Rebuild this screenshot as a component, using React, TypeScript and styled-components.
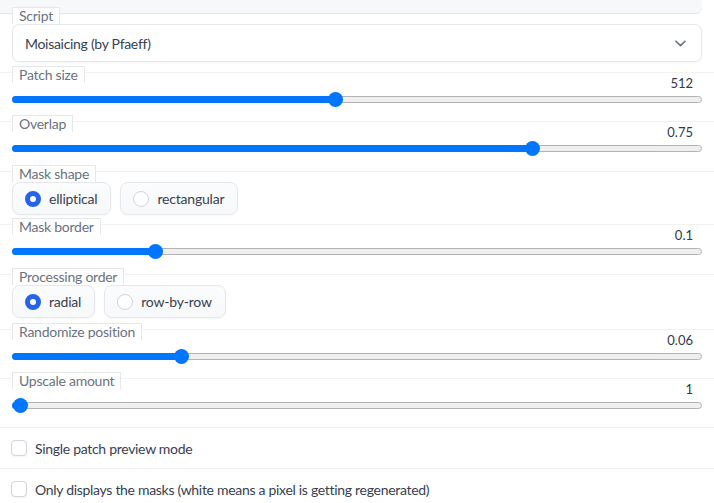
import React from "react";
import styled, { createGlobalStyle } from "styled-components";

const Global = createGlobalStyle`
  html, body { margin: 0; padding: 0; background: #ffffff; }
  body { font-family: Lato, "Open Sans", sans-serif; -webkit-font-smoothing: antialiased; }
  * { box-sizing: border-box; }
`;

const Page = styled.div`
  width: 714px;
  display: flex;
  flex-direction: column;
  background: #ffffff;
`;

const TopBand = styled.div`
  height: 14px;
  width: 702px;
  background: #f7f8fa;
  border-bottom: 1px solid #e5e7eb;
  border-bottom-right-radius: 6px;
`;

const Block = styled.div<{ $first?: boolean; $pb?: number }>`
  border-top: ${(p) => (p.$first ? "none" : "1px solid #f1f2f4")};
  padding: 0 12px ${(p) => p.$pb ?? 0}px 12px;
  display: flex;
  flex-direction: column;
`;

const Label = styled.div`
  align-self: flex-start;
  margin-top: -7px;
  height: 17px;
  padding: 0 6px;
  border: 1px solid #e5e7eb;
  border-bottom: none;
  background: #ffffff;
  color: #6b7280;
  font-size: 14px;
  line-height: 16px;
  letter-spacing: -0.25px;
  position: relative;
`;

const Dropdown = styled.div`
  height: 38px;
  border: 1px solid #e5e7eb;
  border-radius: 7px;
  box-shadow: 0 1px 2px rgba(0, 0, 0, 0.04);
  display: flex;
  align-items: center;
  justify-content: space-between;
  padding: 0 15px 0 12px;
  color: #374151;
  font-size: 14px;
  letter-spacing: -0.3px;
`;

const ValueRow = styled.div`
  margin-top: -7px;
  height: 14px;
  line-height: 14px;
  text-align: right;
  padding-right: 9px;
  font-size: 13px;
  color: #2f3a4f;
`;

const TrackWrap = styled.div`
  margin-top: 2px;
  height: 14px;
  display: flex;
  align-items: center;
`;

const Track = styled.div`
  position: relative;
  width: 100%;
  height: 7px;
  border-radius: 4px;
  background: #efefef;
  border: 1px solid #b2b2b2;
`;

const Fill = styled.div`
  position: absolute;
  left: -1px;
  top: -1px;
  bottom: -1px;
  border-radius: 4px;
  background: #0075ff;
`;

const Thumb = styled.div`
  position: absolute;
  top: 50%;
  width: 15px;
  height: 15px;
  margin-left: -7.5px;
  margin-top: -7.5px;
  border-radius: 50%;
  background: #0075ff;
`;

const RadioRow = styled.div`
  display: flex;
  gap: 9px;
  height: 33px;
`;

const RadioItem = styled.div`
  display: flex;
  align-items: center;
  gap: 8px;
  padding: 0 13px 0 12px;
  height: 33px;
  border: 1px solid #e5e7eb;
  border-radius: 8px;
  background: linear-gradient(#fbfcfd, #f7f8fa);
  box-shadow: 0 1px 2px rgba(0, 0, 0, 0.04);
  color: #374151;
  font-size: 14px;
  letter-spacing: -0.2px;
`;

const RadioDot = styled.span<{ $on?: boolean }>`
  width: 16px;
  height: 16px;
  border-radius: 50%;
  flex: none;
  background: #ffffff;
  border: ${(p) => (p.$on ? "5px solid #2563eb" : "1px solid #d1d5db")};
`;

const CheckRow = styled.div`
  border-top: 1px solid #eeeff1;
  height: 41px;
  display: flex;
  align-items: center;
  gap: 8px;
  padding: 0 11px;
  color: #374151;
  font-size: 14px;
  letter-spacing: -0.3px;
`;

const CheckBox = styled.span`
  width: 16px;
  height: 16px;
  flex: none;
  border: 1px solid #d1d5db;
  border-radius: 4px;
  background: #ffffff;
  box-shadow: 0 1px 2px rgba(0, 0, 0, 0.05);
`;

const Chevron = () => (
  <svg width="11" height="7" viewBox="0 0 11 7" fill="none">
    <path d="M1 1.2 L5.5 5.6 L10 1.2" stroke="#6b7280" strokeWidth="1.6" strokeLinecap="round" strokeLinejoin="round" />
  </svg>
);

const Slider = ({ label, value, frac, pb }: { label: string; value: string; frac: number; pb: number }) => {
  const pos = `calc(7.5px + ${frac} * (100% - 13px))`;
  return (
    <Block $pb={pb}>
      <Label>{label}</Label>
      <ValueRow>{value}</ValueRow>
      <TrackWrap>
        <Track>
          <Fill style={{ width: pos }} />
          <Thumb style={{ left: pos }} />
        </Track>
      </TrackWrap>
    </Block>
  );
};

const Radios = ({ label, options, selected, pb }: { label: string; options: string[]; selected: number; pb: number }) => (
  <Block $pb={pb}>
    <Label>{label}</Label>
    <RadioRow>
      {options.map((o, i) => (
        <RadioItem key={o}>
          <RadioDot $on={i === selected} />
          {o}
        </RadioItem>
      ))}
    </RadioRow>
  </Block>
);

export default function App() {
  return (
    <Page>
      <Global />
      <TopBand />
      <Block $first $pb={10}>
        <Label>Script</Label>
        <Dropdown>
          <span>Moisaicing (by Pfaeff)</span>
          <Chevron />
        </Dropdown>
      </Block>
      <Slider label="Patch size" value="512" frac={0.466} pb={15} />
      <Slider label="Overlap" value="0.75" frac={0.758} pb={16} />
      <Radios label="Mask shape" options={["elliptical", "rectangular"]} selected={0} pb={9} />
      <Slider label="Mask border" value="0.1" frac={0.2} pb={16} />
      <Radios label="Processing order" options={["radial", "row-by-row"]} selected={0} pb={11} />
      <Slider label="Randomize position" value="0.06" frac={0.239} pb={15} />
      <Slider label="Upscale amount" value="1" frac={0} pb={15} />
      <CheckRow>
        <CheckBox />
        Single patch preview mode
      </CheckRow>
      <CheckRow>
        <CheckBox />
        Only displays the masks (white means a pixel is getting regenerated)
      </CheckRow>
    </Page>
  );
}
